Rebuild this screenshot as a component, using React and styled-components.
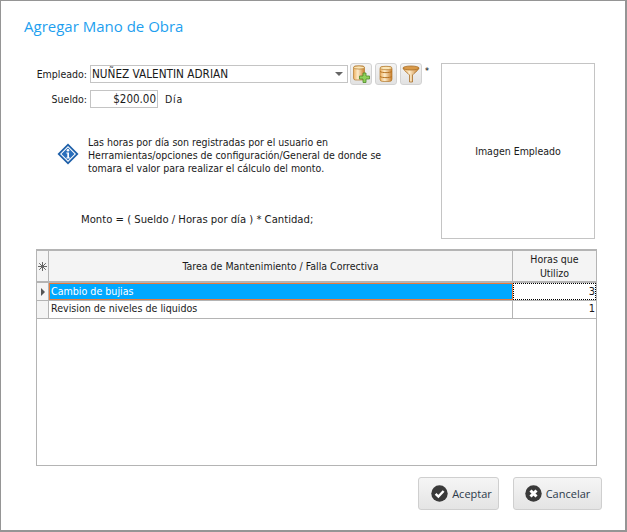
import React from "react";
import styled, { createGlobalStyle } from "styled-components";

const GlobalStyle = createGlobalStyle`
  html, body { margin: 0; padding: 0; background: #fff; }
  * { box-sizing: border-box; }
`;

const Win = styled.div`
  width: 627px;
  height: 532px;
  background: #fff;
  border: 1px solid #959595;
  border-width: 1px 2px 2px 1px;
  padding: 16px 23px 0 23px;
  font-family: "DejaVu Sans", sans-serif;
  font-stretch: condensed;
  font-size: 10.5px;
  color: #1a1a1a;
  display: flex;
  flex-direction: column;
`;

const Title = styled.h1`
  margin: 0;
  height: 46px;
  font-family: "Open Sans", sans-serif;
  font-stretch: normal;
  font-weight: 400;
  font-size: 15px;
  line-height: 19px;
  color: #1e9fef;
`;

const Top = styled.div`
  display: flex;
  height: 186px;
  align-items: flex-start;
`;

const Left = styled.div`
  width: 417px;
  display: flex;
  flex-direction: column;
`;

const FieldRow = styled.div`
  display: flex;
  align-items: center;
  height: 22px;
  margin-bottom: ${(p) => p.$mb || 0}px;
`;

const Label = styled.span`
  width: 63px;
  text-align: right;
  margin-right: 3px;
  white-space: nowrap;
`;

const Combo = styled.div`
  width: 258px;
  height: 18px;
  border: 1px solid #c4c4c4;
  display: flex;
  align-items: center;
  justify-content: space-between;
  padding: 0 4px 0 1px;
  margin-right: 2px;
  font-size: 11.7px;
`;

const Arrow = styled.i`
  width: 0;
  height: 0;
  border-left: 4px solid transparent;
  border-right: 4px solid transparent;
  border-top: 4px solid #666;
`;

const IconBtn = styled.button`
  width: 22px;
  height: 22px;
  padding: 0;
  margin-right: 3px;
  border: 1px solid #d2d2d2;
  border-radius: 3px;
  background: linear-gradient(#f4f4f4, #e2e2e2);
  display: flex;
  align-items: center;
  justify-content: center;
`;

const Star = styled.span`
  font-size: 9px;
  line-height: 9px;
  align-self: flex-start;
  margin-top: 4px;
  color: #000;
`;

const Money = styled.div`
  width: 68px;
  height: 18px;
  border: 1px solid #c4c4c4;
  text-align: right;
  padding-right: 1px;
  line-height: 16px;
  font-size: 11.5px;
  margin-right: 7px;
`;

const Unit = styled.span`
  letter-spacing: 0.8px;
`;

const Note = styled.div`
  display: flex;
  align-items: center;
  margin: 26px 0 0 33px;
`;

const NoteIcon = styled.div`
  width: 22px;
  height: 22px;
  margin-right: 9px;
  margin-top: -3px;
`;

const NoteText = styled.p`
  margin: 0;
  width: 310px;
  line-height: 13px;
  font-size: 10.5px;
`;

const Formula = styled.p`
  margin: 38px 0 0 57px;
  font-size: 11.2px;
  line-height: 14px;
`;

const Picture = styled.div`
  width: 154px;
  height: 176px;
  border: 1px solid #c4c4c4;
  display: flex;
  align-items: center;
  justify-content: center;
`;

const Grid = styled.div`
  margin-left: 12px;
  width: 561px;
  height: 217px;
  border: 1px solid #b4b4b4;
  border-top-width: 2px;
`;

const Row = styled.div`
  display: grid;
  grid-template-columns: 12px 464px 83px;
  height: ${(p) => p.$h}px;
  border-bottom: ${(p) => p.$bw || 1}px solid #b4b4b4;
`;

const Head = styled.div`
  background: #f4f4f4;
  border-right: 1px solid #b4b4b4;
  display: flex;
  align-items: center;
  justify-content: center;
  text-align: center;
  line-height: 14px;
  &:last-child { border-right: 0; }
`;

const RowMark = styled.div`
  background: #f4f4f4;
  border-right: 1px solid #b4b4b4;
  display: flex;
  align-items: center;
  justify-content: center;
`;

const Marker = styled.i`
  width: 0;
  height: 0;
  border-top: 4px solid transparent;
  border-bottom: 4px solid transparent;
  border-left: 4px solid #555;
`;

const Cell = styled.div`
  padding-left: 2px;
  line-height: 15px;
  border-right: 1px solid #b4b4b4;
  white-space: nowrap;
  font-size: 10.6px;
  ${(p) => p.$selected && `
    background: #00a8ff;
    color: #fff;
    border: 1px solid #e8793a;
    padding-left: 1px;
    line-height: 14px;
  `}
`;

const NumCell = styled.div`
  text-align: right;
  padding-right: 1px;
  line-height: 16px;
  font-size: 11px;
  color: #1a1a1a;
  ${(p) => p.$focus && `
    border: 1px dotted #000;
    line-height: 15px;
    padding-right: 0;
  `}
`;

const Footer = styled.div`
  display: flex;
  justify-content: flex-end;
  gap: 14px;
  margin: 11px 0 0 0;
`;

const Action = styled.button`
  width: ${(p) => p.$w}px;
  height: 33px;
  padding: 0 0 0 ${(p) => p.$pad || 0}px;
  border: 1px solid #cfcfcf;
  border-radius: 3px;
  background: linear-gradient(#f5f5f5, #e4e4e4);
  display: flex;
  align-items: center;
  justify-content: center;
  gap: 4px;
  font-family: "Open Sans", sans-serif;
  font-size: 11px;
  color: #2b3a4a;
`;

const GoldDefs = () => (
  <defs>
    <linearGradient id="gold" x1="0" x2="1" y1="0" y2="0">
      <stop offset="0" stopColor="#eeb060" />
      <stop offset="0.4" stopColor="#fdeccb" />
      <stop offset="1" stopColor="#c87c28" />
    </linearGradient>
  </defs>
);

const AddDbIcon = () => (
  <svg width="20" height="20" viewBox="0 0 20 20">
    <GoldDefs />
    <rect x="2.5" y="2" width="11" height="14" rx="2" fill="url(#gold)" stroke="#b27a2e" strokeWidth="0.7" />
    <ellipse cx="8" cy="3.5" rx="5.5" ry="1.6" fill="#fbe6b8" stroke="#b27a2e" strokeWidth="0.7" />
    <path d="M12 9h3v3h3.5v3H15v3.5h-3V15H8.5v-3H12z" fill="#8fd058" stroke="#4d8a28" strokeWidth="0.8" />
  </svg>
);

const DbIcon = () => (
  <svg width="20" height="20" viewBox="0 0 20 20">
    <GoldDefs />
    <rect x="4" y="2.5" width="12" height="15" rx="2.5" fill="url(#gold)" stroke="#b27a2e" strokeWidth="0.7" />
    <path d="M4 7.5c2 1.5 10 1.5 12 0M4 12.5c2 1.5 10 1.5 12 0" fill="none" stroke="#b87424" />
    <ellipse cx="10" cy="4" rx="6" ry="1.7" fill="#fbe6b8" stroke="#b27a2e" strokeWidth="0.7" />
  </svg>
);

const FunnelIcon = () => (
  <svg width="20" height="20" viewBox="0 0 20 20">
    <GoldDefs />
    <path d="M2 4c1 3 5 5 6.5 7v7h3v-7C13 9 17 7 18 4z" fill="url(#gold)" stroke="#a86f28" strokeWidth="0.8" />
    <ellipse cx="10" cy="4" rx="8" ry="2" fill="#d99a4a" stroke="#a86f28" strokeWidth="0.8" />
  </svg>
);

const InfoIcon = () => (
  <svg width="22" height="22" viewBox="0 0 22 22">
    <path d="M11 .5 21.5 11 11 21.5.5 11z" fill="#1d5fa8" />
    <path d="M11 3 19 11 11 19 3 11z" fill="#fff" />
    <path d="M11 4.5 17.5 11 11 17.5 4.5 11z" fill="#2a6fbc" />
    <circle cx="11" cy="7.3" r="1.3" fill="#fff" />
    <path d="M9.3 9.4h2.7v5h1v1.2H9.3v-1.2h1v-3.8h-1z" fill="#fff" />
  </svg>
);

const CheckIcon = () => (
  <svg width="17" height="17" viewBox="0 0 17 17">
    <circle cx="8.5" cy="8.5" r="8.2" fill="#3a3a3a" />
    <path d="M4.6 8.8 7.4 11.6 12.6 6" fill="none" stroke="#fff" strokeWidth="2.4" />
  </svg>
);

const CrossIcon = () => (
  <svg width="17" height="17" viewBox="0 0 17 17">
    <circle cx="8.5" cy="8.5" r="8.2" fill="#3a3a3a" />
    <path d="M5.5 5.5l6 6M11.5 5.5l-6 6" fill="none" stroke="#fff" strokeWidth="3" />
  </svg>
);

const App = () => {
  return (
    <>
      <GlobalStyle />
      <Win>
        <Title>Agregar Mano de Obra</Title>
        <Top>
          <Left>
            <FieldRow $mb={3}>
              <Label>Empleado:</Label>
              <Combo>
                NUÑEZ VALENTIN ADRIAN
                <Arrow />
              </Combo>
              <IconBtn><AddDbIcon /></IconBtn>
              <IconBtn><DbIcon /></IconBtn>
              <IconBtn><FunnelIcon /></IconBtn>
              <Star>*</Star>
            </FieldRow>
            <FieldRow>
              <Label>Sueldo:</Label>
              <Money>$200.00</Money>
              <Unit>Día</Unit>
            </FieldRow>
            <Note>
              <NoteIcon><InfoIcon /></NoteIcon>
              <NoteText>
                Las horas por día son registradas por el usuario en
                Herramientas/opciones de configuración/General de donde se
                tomara el valor para realizar el cálculo del monto.
              </NoteText>
            </Note>
            <Formula>Monto = ( Sueldo / Horas por día ) * Cantidad;</Formula>
          </Left>
          <Picture>Imagen Empleado</Picture>
        </Top>
        <Grid>
          <Row $h={32} $bw={2}>
            <Head>
              <svg width="9" height="9" viewBox="0 0 9 9">
                <path d="M4.5 0v9M0 4.5h9M1.2 1.2l6.6 6.6M7.8 1.2 1.2 7.8" stroke="#666" strokeWidth="1" />
              </svg>
            </Head>
            <Head>Tarea de Mantenimiento / Falla Correctiva</Head>
            <Head>Horas que<br />Utilizo</Head>
          </Row>
          <Row $h={18}>
            <RowMark><Marker /></RowMark>
            <Cell $selected>Cambio de bujias</Cell>
            <NumCell $focus>3</NumCell>
          </Row>
          <Row $h={18}>
            <RowMark />
            <Cell>Revision de niveles de liquidos</Cell>
            <NumCell>1</NumCell>
          </Row>
        </Grid>
        <Footer>
          <Action $w={81} $pad={6}><CheckIcon />Aceptar</Action>
          <Action $w={89}><CrossIcon />Cancelar</Action>
        </Footer>
      </Win>
    </>
  );
};

export default App;
